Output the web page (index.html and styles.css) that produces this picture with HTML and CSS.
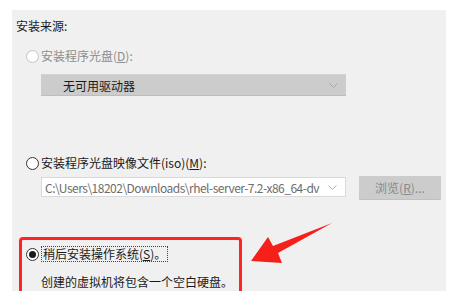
FILE: index.html
```html
<!DOCTYPE html>
<html lang="zh-CN">
<head>
    <meta charset="UTF-8">
    <title>安装来源</title>
    <link rel="stylesheet" href="styles.css">
</head>
<body>
    <div class="panel">
        <div class="heading">安装来源:</div>

        <div class="option disabled">
            <span class="radio"></span>
            <span class="label">安装程序光盘(<u>D</u>):</span>
        </div>
        <div class="select-box">
            <span class="select-text">无可用驱动器</span>
            <svg class="chevron" width="9" height="5" viewBox="0 0 9 5"><path d="M0.5 0.5 L4.5 4.5 L8.5 0.5" fill="none" stroke="#a8a8a8" stroke-width="1"/></svg>
        </div>

        <div class="option option-iso">
            <span class="radio"></span>
            <span class="label">安装程序光盘映像文件(iso)(<u>M</u>):</span>
        </div>
        <div class="iso-row">
            <div class="combo">
                <span class="combo-text">C:\Users\18202\Downloads\rhel-server-7.2-x86_64-dv</span>
                <svg class="chevron" width="9" height="5" viewBox="0 0 9 5"><path d="M0.5 0.5 L4.5 4.5 L8.5 0.5" fill="none" stroke="#b4b4b4" stroke-width="1"/></svg>
            </div>
            <button class="browse-btn">浏览(<u>R</u>)...</button>
        </div>

        <div class="option option-later">
            <span class="radio checked"></span>
            <span class="label focus">稍后安装操作系统(<u>S</u>)。</span>
        </div>
        <div class="description">创建的虚拟机将包含一个空白硬盘。</div>

        <!-- annotation overlay -->
        <div class="highlight"></div>
        <svg class="arrow" width="90" height="48" viewBox="0 0 90 48">
            <polygon points="3,41 20,17 25,26 84,3 30,33 34,43" fill="#f5201a"/>
        </svg>
    </div>
</body>
</html>
```

FILE: styles.css
```css
* {
    margin: 0;
    padding: 0;
    box-sizing: border-box;
}

body {
    font-family: "Noto Sans CJK SC", "Noto Sans", sans-serif;
    font-size: 12px;
    color: #1a1a1a;
    background-color: #ffffff;
}

.panel {
    position: relative;
    width: 434px;
    height: 281px;
    margin: 10px 0 0 12px;
    padding: 8px 0 0 0;
    background-color: #f0f0f0;
    overflow: hidden;
    display: flex;
    flex-direction: column;
}

.heading {
    height: 16px;
    line-height: 16px;
    margin-left: 4px;
}

.option {
    display: flex;
    align-items: center;
    height: 16px;
    margin-left: 14px;
}

.option .label {
    line-height: 16px;
    margin-left: 2px;
}

.option.disabled {
    margin-top: 14px;
    color: #8d8d8d;
}

.option-iso {
    margin-top: 59px;
}

.option-later {
    margin-top: 46px;
}

.radio {
    width: 13px;
    height: 13px;
    border-radius: 50%;
    border: 1px solid #333333;
    background-color: #ffffff;
    position: relative;
}

.disabled .radio {
    border-color: #c4c4c4;
}

.radio.checked::after {
    content: "";
    position: absolute;
    left: 2px;
    top: 2px;
    width: 7px;
    height: 7px;
    border-radius: 50%;
    background-color: #1a1a1a;
}

.label.focus {
    border: 1px dotted #444444;
    padding: 0 1px;
    line-height: 14px;
}

.select-box {
    display: flex;
    align-items: center;
    justify-content: space-between;
    width: 305px;
    height: 22px;
    margin: 10px 0 0 29px;
    padding: 0 8px 0 22px;
    background-color: #cccccc;
    border-top: 1px solid #d4d4d4;
    border-bottom: 1px solid #bdbdbd;
}

.iso-row {
    display: flex;
    align-items: flex-start;
    gap: 13px;
    margin: 5px 0 0 29px;
}

.combo {
    display: flex;
    align-items: center;
    width: 305px;
    height: 20px;
    margin-top: 1px;
    padding: 0 8px 0 3px;
    background-color: #ffffff;
    border: 1px solid #d9d9d9;
}

.combo-text {
    width: 284px;
    white-space: nowrap;
    color: #6d6d6d;
    letter-spacing: -0.5px;
}

.combo .chevron {
    margin-left: 0;
}

.browse-btn {
    width: 82px;
    height: 24px;
    font-family: inherit;
    font-size: 12px;
    color: #8a8a8a;
    background-color: #cccccc;
    border: none;
    border-bottom: 1px solid #c0c0c0;
}

.description {
    height: 16px;
    line-height: 16px;
    margin: 12px 0 0 29px;
}

.highlight {
    position: absolute;
    left: 7px;
    top: 227px;
    width: 223px;
    height: 80px;
    border: 3px solid #ff2323;
    border-radius: 4px;
}

.arrow {
    position: absolute;
    left: 236px;
    top: 210px;
}
```
